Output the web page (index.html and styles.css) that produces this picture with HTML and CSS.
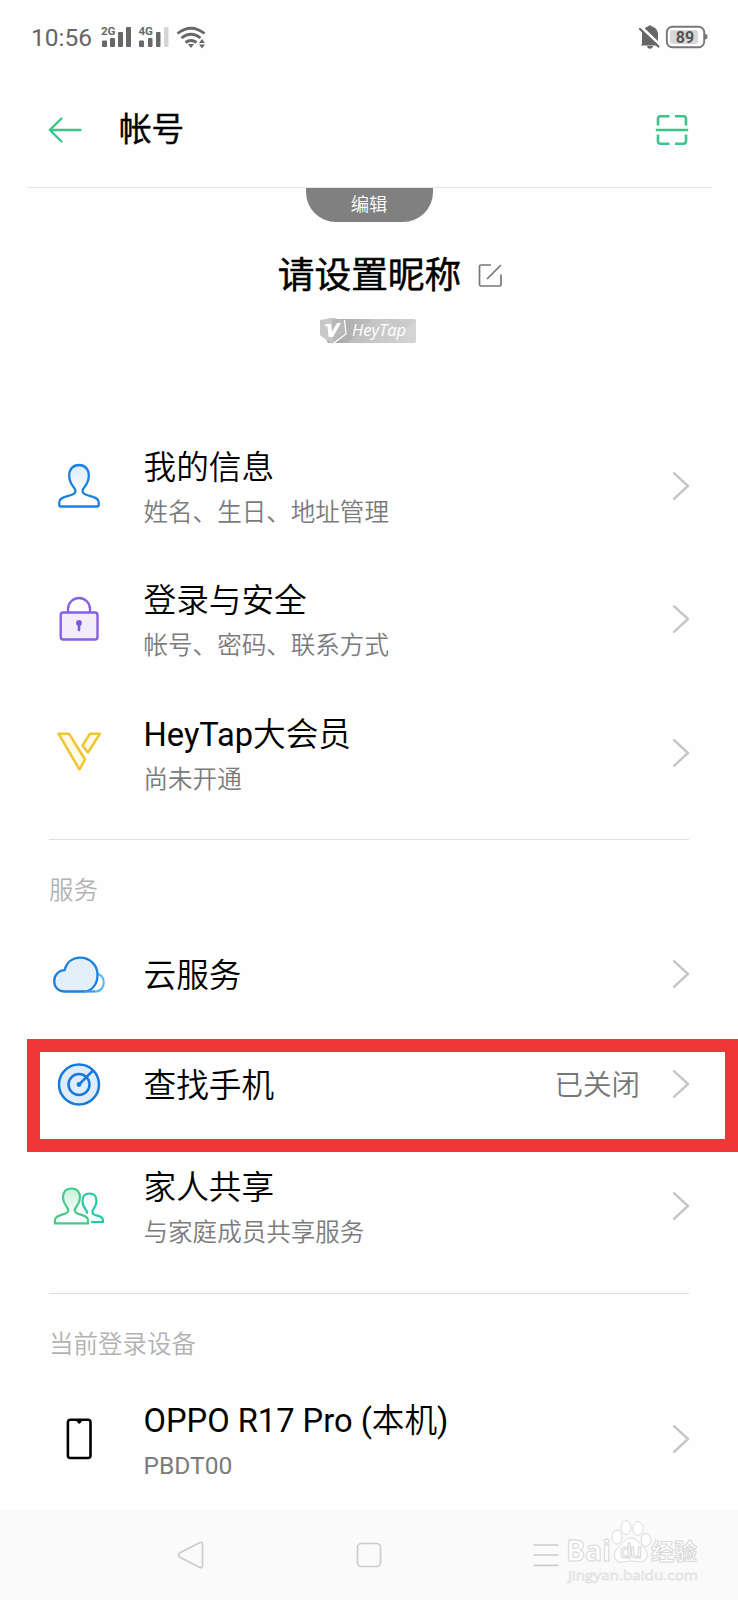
FILE: index.html
```html
<!DOCTYPE html>
<html lang="zh-CN">
<head>
<meta charset="utf-8">
<title>帐号</title>
<link rel="stylesheet" href="styles.css">
</head>
<body>
<svg class="defs" width="0" height="0">
  <defs>
    <linearGradient id="personFill" x1="0" y1="0" x2="0" y2="1"><stop offset="0" stop-color="#d9eaf9"/><stop offset=".7" stop-color="#fff"/></linearGradient>
    <linearGradient id="greenFill" x1="0" y1="0" x2="0" y2="1"><stop offset="0" stop-color="#c9f0d9"/><stop offset=".8" stop-color="#fff"/></linearGradient>
    <linearGradient id="badgeFill" x1="0" y1="0" x2="1" y2="0"><stop offset="0" stop-color="#a5a5a5"/><stop offset=".5" stop-color="#bebebe"/><stop offset="1" stop-color="#d0d0d0"/></linearGradient>
    <symbol id="chev" viewBox="0 0 18 30"><path d="M2 2.2 16 15 2 27.8" fill="none" stroke="#c6c6c6" stroke-width="2.4" stroke-linecap="round" stroke-linejoin="round"/></symbol>
  </defs>
</svg>
<div class="screen">
  <div class="status">
    <span class="clock">10:56</span>
    <svg class="signals" width="108" height="26" viewBox="0 0 108 26">
      <g fill="#686868">
        <rect x="2" y="15.500" width="5" height="6.500" rx="1"/><rect x="10" y="13" width="5" height="9" rx="1"/><rect x="18" y="7" width="5" height="15" rx="1"/><rect x="26" y="2" width="5" height="20" rx="1"/>
        <rect x="39" y="15.500" width="5" height="6.500" rx="1"/><rect x="48" y="13" width="4.500" height="9" rx="1"/><rect x="56" y="7" width="4.500" height="15" rx="1"/>
        <rect x="64" y="2" width="4.500" height="20" rx="1" fill="#d5d5d5"/>
        <path d="M88 19h6l-3 4zM99 18l3-4 3 4zM99 19.500h6l-3 4z"/>
      </g>
      <g fill="none" stroke="#686868" stroke-width="2.800"><path d="M77.500 8.500Q91 -2 104.500 8.500"/><path d="M81.500 13Q91 5.500 100.500 13"/><path d="M85.500 17.500Q91 13.500 96.500 17.500"/></g>
      <g class="net"><text x="1" y="9.500" textLength="14.500" lengthAdjust="spacingAndGlyphs">2G</text><text x="38.500" y="9.500" textLength="14.500" lengthAdjust="spacingAndGlyphs">4G</text></g>
    </svg>
    <svg class="status-right" width="72" height="26" viewBox="0 0 72 26">
      <path d="M5 19.500V10.500C5 6 8 3.200 11.200 2.500 12 .8 14 .8 14.800 2.500 18.500 3.200 21 6.500 21 10.500V19.500L22 21.500H4zM10 22h6q-.5 2.800-3 2.800T10 22z" fill="#666"/>
      <path d="M4.200 3.200 23 21" stroke="#fff" stroke-width="3"/><path d="M3 5 21.500 22.500" stroke="#666" stroke-width="2.200" stroke-linecap="round"/>
      <rect x="29.800" y="2.800" width="37.400" height="20.400" rx="5.500" fill="#fff" stroke="#777" stroke-width="1.900"/>
      <rect x="33" y="6" width="28" height="14" rx="2.500" fill="#d8d8d8"/>
      <path d="M68 10q2.500 0 2.500 2.700T68 15.500z" fill="#777"/>
      <text class="battery" x="48" y="18.500" text-anchor="middle">89</text>
    </svg>
  </div>

  <div class="header">
    <svg class="back" width="36" height="30" viewBox="0 0 36 30"><path d="M14.500 3.500 2.800 15 14.500 26.500M3 15H33.500" fill="none" stroke="#3ac488" stroke-width="2.400" stroke-linecap="round" stroke-linejoin="round"/></svg>
    <h1 class="title">帐号</h1>
    <svg class="scan" width="34" height="32" viewBox="0 0 34 32"><path d="M3 11.500V5Q3 2.300 5.500 2.300H14.500M20 2.300H28.500Q31 2.300 31 5V11.500M3 20.500V27Q3 29.700 5.500 29.700H14.500M20 29.700H28.500Q31 29.700 31 27V20.500M.8 16H33.200" fill="none" stroke="#3fc28b" stroke-width="2.600"/></svg>
  </div>

  <div class="profile">
    <div class="edit-tab">编辑</div>
    <div class="name-line">
      <span class="nickname">请设置昵称</span>
      <svg width="26" height="26" viewBox="0 0 26 26"><path d="M14 2H4Q2.500 2 2.500 3.500V21.500Q2.500 23 4 23H22.500Q24 23 24 21.500V11.500M10 16 24 2" fill="none" stroke="#777" stroke-width="1.700"/></svg>
    </div>
    <svg class="badge" width="98" height="28" viewBox="0 0 98 28">
      <rect x="8" y="2" width="89" height="24" rx="2" fill="url(#badgeFill)"/>
      <path d="M28 26 54 2H68L82 14 97 5V24Q97 26 95 26z" fill="#fff" opacity=".12"/>
      <path d="M1 4 13 1 26.500 3 27 17 13.500 27 1 18z" fill="#b8b8b8"/>
      <path d="M1 3 13 1 14 27 1 18z" fill="#c8c8c8"/>
      <path d="M25.500 3 27 17 13.500 27" fill="none" stroke="#fff" stroke-width="1.300"/>
      <path d="M6.500 7H12L13 14.500 18 6H22L14 20H9.500L8.500 9.500H6z" fill="#fff"/>
      <text class="badge-text" x="33" y="18.500" textLength="54">HeyTap</text>
    </svg>
  </div>

  <div class="row">
    <svg class="icon" width="56" height="48" viewBox="0 0 56 48"><path d="M28 3C22 3 18.200 7.200 18.200 13.500 18.200 19 20.500 22.500 22.500 25 25.500 28.500 25 31 21.500 32.500 15 35 8.300 35.300 8.300 40V43.500Q8.300 44.500 9.300 44.500H46.700Q47.700 44.500 47.700 43.500V40C47.700 35.300 41 35 34.500 32.500 31 31 30.500 28.500 33.500 25 35.500 22.500 37.800 19 37.800 13.500 37.800 7.200 34 3 28 3z" fill="url(#personFill)" stroke="#1c80dd" stroke-width="2.300"/></svg>
    <div class="body"><div class="name">我的信息</div><div class="sub">姓名、生日、地址管理</div></div>
    <svg class="chev"><use href="#chev"/></svg>
  </div>
  <div class="row">
    <svg class="icon" width="56" height="48" viewBox="0 0 56 48"><path d="M17 17.500V14A11 11 0 0 1 39 14V17.500" fill="none" stroke="#8760e2" stroke-width="2.300"/><rect x="9.700" y="17.500" width="36.800" height="27" rx="2.500" fill="#f1edfb" stroke="#8760e2" stroke-width="2.400"/><circle cx="28" cy="28" r="2.900" fill="#7e58d8"/><path d="M28 28.500V35" stroke="#7e58d8" stroke-width="2.600" stroke-linecap="round"/></svg>
    <div class="body"><div class="name">登录与安全</div><div class="sub">帐号、密码、联系方式</div></div>
    <svg class="chev"><use href="#chev"/></svg>
  </div>
  <div class="row">
    <svg class="icon" width="56" height="48" viewBox="0 0 56 48"><g fill="#fff9e5" stroke="#f0c630" stroke-width="2.500" stroke-linejoin="round"><path d="M7.500 4.700H18L34 30.500 28.500 40.500z"/><path d="M39 4.700H49L37 23.500 31.500 16.500z"/></g></svg>
    <div class="body"><div class="name">HeyTap大会员</div><div class="sub">尚未开通</div></div>
    <svg class="chev"><use href="#chev"/></svg>
  </div>

  <div class="section"><span>服务</span></div>

  <div class="row single">
    <svg class="icon" width="56" height="48" viewBox="0 0 56 48"><g transform="translate(0 -1)"><path d="M44 42.500C50 42.500 52.700 38 52.700 33.500 52.700 28.500 49.500 25.500 46 24.500" fill="none" stroke="#58b9f0" stroke-width="2.200"/><path d="M14 42.500C7 42.500 3.200 38 3.200 32 3.200 26 7.500 21.500 13.500 21.200 15.500 14 21 8.700 29 8.700 39 8.700 46.500 16 46.500 26 46.500 35 41 42.500 33 42.500z" fill="#e3f0fa" stroke="#1c80dd" stroke-width="2.300"/><path d="M33 42.500H44" stroke="#349ae5" stroke-width="2.200"/></g></svg>
    <div class="body"><div class="name">云服务</div></div>
    <svg class="chev"><use href="#chev"/></svg>
  </div>
  <div class="row single marked">
    <svg class="icon" width="56" height="48" viewBox="0 0 56 48"><g fill="#deedf9" stroke="#1979da" stroke-width="2.500"><circle cx="28" cy="24.500" r="20"/><circle cx="28" cy="24.500" r="10.500"/></g><path d="M28 24.500 41.500 11" stroke="#1979da" stroke-width="2.500"/><circle cx="28" cy="24.500" r="2.400" fill="#1979da"/></svg>
    <div class="body"><div class="name">查找手机</div></div>
    <span class="value">已关闭</span>
    <svg class="chev"><use href="#chev"/></svg>
    <div class="marker"></div>
  </div>
  <div class="row">
    <svg class="icon" width="56" height="48" viewBox="0 0 56 48"><path d="M20.500 6.500C14.500 6.500 12 10.500 12 15.500 12 20 14 22.500 15.500 24.500 18 28 18 30 14.500 31.500 9 33.500 4 34 4 38V41.300H37V38C37 34 32 33.500 26.500 31.500 23 30 23 28 25.500 24.500 27 22.500 29 20 29 15.500 29 10.500 26.500 6.500 20.500 6.500z" fill="url(#greenFill)" stroke="#42cb87" stroke-width="2.200"/><path d="M35.500 31.500C36.200 30.500 35.800 29 34.800 27.800 33 25.500 31.500 23 31.500 19 31.500 14.500 34 11.500 38.500 11.500S45.500 14.500 45.500 19C45.500 23 44 25 42.500 27 40.500 30 41 32 44 33 48.500 34.300 52 34.800 52 38.300V40H40" fill="none" stroke="#22caa4" stroke-width="2.200"/></svg>
    <div class="body"><div class="name">家人共享</div><div class="sub">与家庭成员共享服务</div></div>
    <svg class="chev"><use href="#chev"/></svg>
  </div>

  <div class="section devices"><span>当前登录设备</span></div>

  <div class="row last">
    <svg class="icon" width="56" height="48" viewBox="0 0 56 48"><rect x="16.900" y="4.700" width="22.600" height="38.300" rx="2.500" fill="none" stroke="#000" stroke-width="2.600"/><path d="M22 4.500H34L30.500 6.500Q28.200 11 26 6.500z"/></svg>
    <div class="body"><div class="name">OPPO R17 Pro (本机)</div><div class="sub">PBDT00</div></div>
    <svg class="chev"><use href="#chev"/></svg>
  </div>

  <div class="navbar">
    <svg width="30" height="30" viewBox="0 0 30 30"><path d="M24 2.500 3.500 13Q1.500 15 3.500 17L24 27.500Q26.500 28 26.500 25.500V4.500Q26.500 2 24 2.500z" fill="none" stroke="#ccc" stroke-width="1.700"/></svg>
    <svg width="30" height="30" viewBox="0 0 30 30"><rect x="3.500" y="3.500" width="23" height="23" rx="4" fill="none" stroke="#ccc" stroke-width="1.700"/></svg>
    <svg width="30" height="30" viewBox="0 0 30 30"><path d="M2.500 5H27.500M2.500 15H27.500M2.500 25.300H27.500" fill="none" stroke="#ccc" stroke-width="1.700"/></svg>
    <svg class="watermark" width="140" height="70" viewBox="0 0 140 70">
      <g fill="#fff" stroke="#dadada" stroke-width="1">
        <ellipse cx="52" cy="17" rx="5" ry="7"/><ellipse cx="61" cy="7.500" rx="5" ry="6.800"/><ellipse cx="73" cy="8.500" rx="5.200" ry="6.800"/><ellipse cx="81" cy="20" rx="5" ry="6.500"/>
        <path d="M66 18C60 18 58 23 54 27 49 31 48 36 51 40 55 44 60 41 66 41S76 44 80 40C84 36 82 31 78 27 74 23 72 18 66 18z"/>
      </g>
      <g class="wm-big"><text x="1" y="41" textLength="45" lengthAdjust="spacingAndGlyphs">Bai</text><text class="wm-du" x="55" y="38" textLength="22">du</text><text class="wm-cn" x="86" y="40" textLength="46">经验</text></g>
      <text class="wm-url" x="3" y="59.500" textLength="130" lengthAdjust="spacingAndGlyphs">jingyan.baidu.com</text>
    </svg>
  </div>
</div>
</body>
</html>
```
FILE: styles.css
```css
* { box-sizing: border-box; }
body {
  margin: 0;
  background: #fff;
  color: #000;
  font-family: Roboto, "Noto Sans CJK SC DemiLight", "Noto Sans CJK SC", sans-serif;
}
svg { display: block; flex: none; }
.defs { position: absolute; }
.screen {
  width: 738px;
  height: 1600px;
  display: flex;
  flex-direction: column;
  overflow: hidden;
  background: #fefefe;
}

/* status bar */
.status {
  height: 74px;
  display: flex;
  align-items: center;
  padding: 1px 29px 0 31px;
}
.clock { font-size: 24.500px; color: #666; width: 69px; line-height: 28px; }
.status-right { margin: -1px 0 0 auto; }
.net text { font: 700 10.500px Roboto, sans-serif; fill: #686868; }
.battery { font: 700 16px Roboto, sans-serif; fill: #555; }

/* title bar */
.header {
  height: 114px;
  margin: 0 26px 0 27px;
  padding: 0 23px 2px 20px;
  display: flex;
  align-items: center;
  border-bottom: 1px solid #e8e8e8;
}
.title {
  margin: 0 0 0 36px;
  padding-top: 1px;
  font-size: 32.600px;
  font-weight: 400;
  line-height: 40px;
  -webkit-text-stroke: .6px #000;
}
.scan { margin-left: auto; }

/* profile */
.profile {
  height: 231px;
  display: flex;
  flex-direction: column;
  align-items: center;
}
.edit-tab {
  width: 127px;
  height: 34px;
  border-radius: 0 0 30px 30px;
  background: #808080;
  color: #fff;
  font-size: 18.300px;
  line-height: 34px;
  text-align: center;
}
.name-line {
  display: flex;
  align-items: center;
  gap: 16px;
  margin: 31px 0 0 43px;
  height: 46px;
}
.nickname {
  font-size: 36.700px;
  line-height: 46px;
  -webkit-text-stroke: .7px #000;
}
.badge { margin: 18px 2px 0 0; }
.badge-text { font: italic 500 16.500px "Open Sans", sans-serif; fill: #fff; }

/* list rows */
.row {
  position: relative;
  height: 133.500px;
  flex: none;
  display: flex;
  align-items: center;
  padding: 0 48px 0 51px;
}
.body { flex: 1; margin-left: 36.500px; padding-top: 9px; }
.name { font-size: 32.650px; line-height: 44px; }
.sub { font-size: 24.550px; line-height: 45px; color: #7b7b7b; }
.single { height: 110px; }
.single .body { padding-top: 4px; }
.value { font-size: 28.500px; line-height: 40px; color: #777; margin: 3px 32px 0 0; }
.chev { width: 18px; height: 30px; }
.marker {
  position: absolute;
  left: 27px;
  right: 0;
  top: 10px;
  height: 113px;
  border: 13px solid #ef3737;
}

/* section headings */
.section {
  flex: none;
  height: 99.500px;
  margin: 0 49px;
  padding-top: 19.500px;
}
.section span {
  display: block;
  border-top: 1px solid #dedede;
  padding-top: 28px;
  font-size: 24.500px;
  line-height: 46px;
  color: #b2b2b2;
}
.devices { padding-top: 20.500px; }

/* navigation bar */
.navbar {
  position: relative;
  flex: none;
  height: 90px;
  margin-top: auto;
  background: #fafafa;
  display: flex;
  align-items: center;
  padding-left: 176px;
  gap: 147.500px;
}
.watermark { position: absolute; left: 565px; top: 10px; }
.watermark text { font-family: "Open Sans", "Noto Sans CJK SC", sans-serif; fill: #fff; stroke: #d8d8d8; stroke-width: 1px; }
.watermark .wm-big text { font-size: 28px; font-weight: 700; }
.watermark .wm-big .wm-du { font-size: 19px; font-weight: 600; }
.watermark .wm-big .wm-cn { font-size: 23px; }
.watermark .wm-url { font-size: 13.500px; stroke: #e3e3e3; stroke-width: .8px; }
```
